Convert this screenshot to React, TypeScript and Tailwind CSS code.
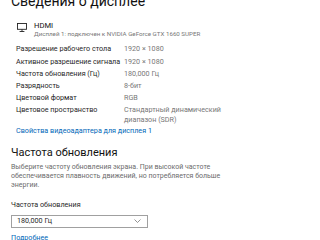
import React from "react";

function MonitorIcon() {
  return (
    <svg width="10" height="9" viewBox="0 0 10 9" fill="none" stroke="#222" strokeWidth="0.9">
      <rect x="0.5" y="0.5" width="9" height="5.8" />
      <path d="M5 6.3v2.2M2.6 8.5h4.8" />
    </svg>
  );
}

function Row({ label, value }: { label: string; value: React.ReactNode }) {
  return (
    <div className="flex py-[1.1px] leading-[10px]">
      <div className="w-[108px] shrink-0 whitespace-nowrap text-[#1f1f1f]">{label}</div>
      <div className="text-[#777] whitespace-nowrap">{value}</div>
    </div>
  );
}

export default function App() {
  return (
    <div
      className="w-[320px] h-[240px] overflow-hidden bg-white relative"
      style={{ fontFamily: 'Roboto, "Noto Sans", sans-serif' }}
    >
      <div className="pl-[11px] mt-[-8px] text-[14px] leading-[18px] text-[#111]">Сведения о дисплее</div>

      <div className="flex mt-[10.5px] pl-[17px]">
        <div className="mt-[2.5px]">
          <MonitorIcon />
        </div>
        <div className="ml-[7px]">
          <div className="text-[7.6px] leading-[9px] text-[#111]">HDMI</div>
          <div className="text-[6.2px] leading-[9px] text-[#777] whitespace-nowrap">
            Дисплей 1: подключен к NVIDIA GeForce GTX 1660 SUPER
          </div>
        </div>
      </div>

      <div className="pl-[16px] mt-[4.9px] text-[7.2px]">
        <Row label="Разрешение рабочего стола" value="1920 × 1080" />
        <Row label="Активное разрешение сигнала" value="1920 × 1080" />
        <Row label="Частота обновления (Гц)" value="180,000 Гц" />
        <Row label="Разрядность" value="8-бит" />
        <Row label="Цветовой формат" value="RGB" />
        <Row
          label="Цветовое пространство"
          value={
            <>
              Стандартный динамический
              <br />
              диапазон (SDR)
            </>
          }
        />
        <div className="mt-[-0.6px] leading-[10px] text-[#0067b8]">Свойства видеоадаптера для дисплея 1</div>
      </div>

      <div className="pl-[11px] mt-[9.5px] text-[11px] leading-[15px] text-[#111]">Частота обновления</div>

      <div className="pl-[11px] mt-[3px] text-[7px] leading-[9px] text-[#6b6b6b] whitespace-nowrap">
        Выберите частоту обновления экрана. При высокой частоте
        <br />
        обеспечивается плавность движений, но потребляется больше
        <br />
        энергии.
      </div>

      <div className="pl-[11px] mt-[9.5px] text-[7.2px] leading-[10px] text-[#1f1f1f]">Частота обновления</div>

      <div className="ml-[11px] mt-[5px] w-[137px] h-[13px] border border-[#a0a0a0] flex items-center justify-between pl-[5px] pr-[6px]">
        <span className="text-[7.2px] text-[#1f1f1f] leading-[10px]">180,000 Гц</span>
        <svg width="7" height="4" viewBox="0 0 7 4" fill="none" stroke="#777" strokeWidth="0.8">
          <path d="M0.5 0.5L3.5 3.5L6.5 0.5" />
        </svg>
      </div>

      <div className="pl-[11px] mt-[5.5px] text-[7.2px] leading-[10px] text-[#0067b8]">Подробнее</div>
    </div>
  );
}
